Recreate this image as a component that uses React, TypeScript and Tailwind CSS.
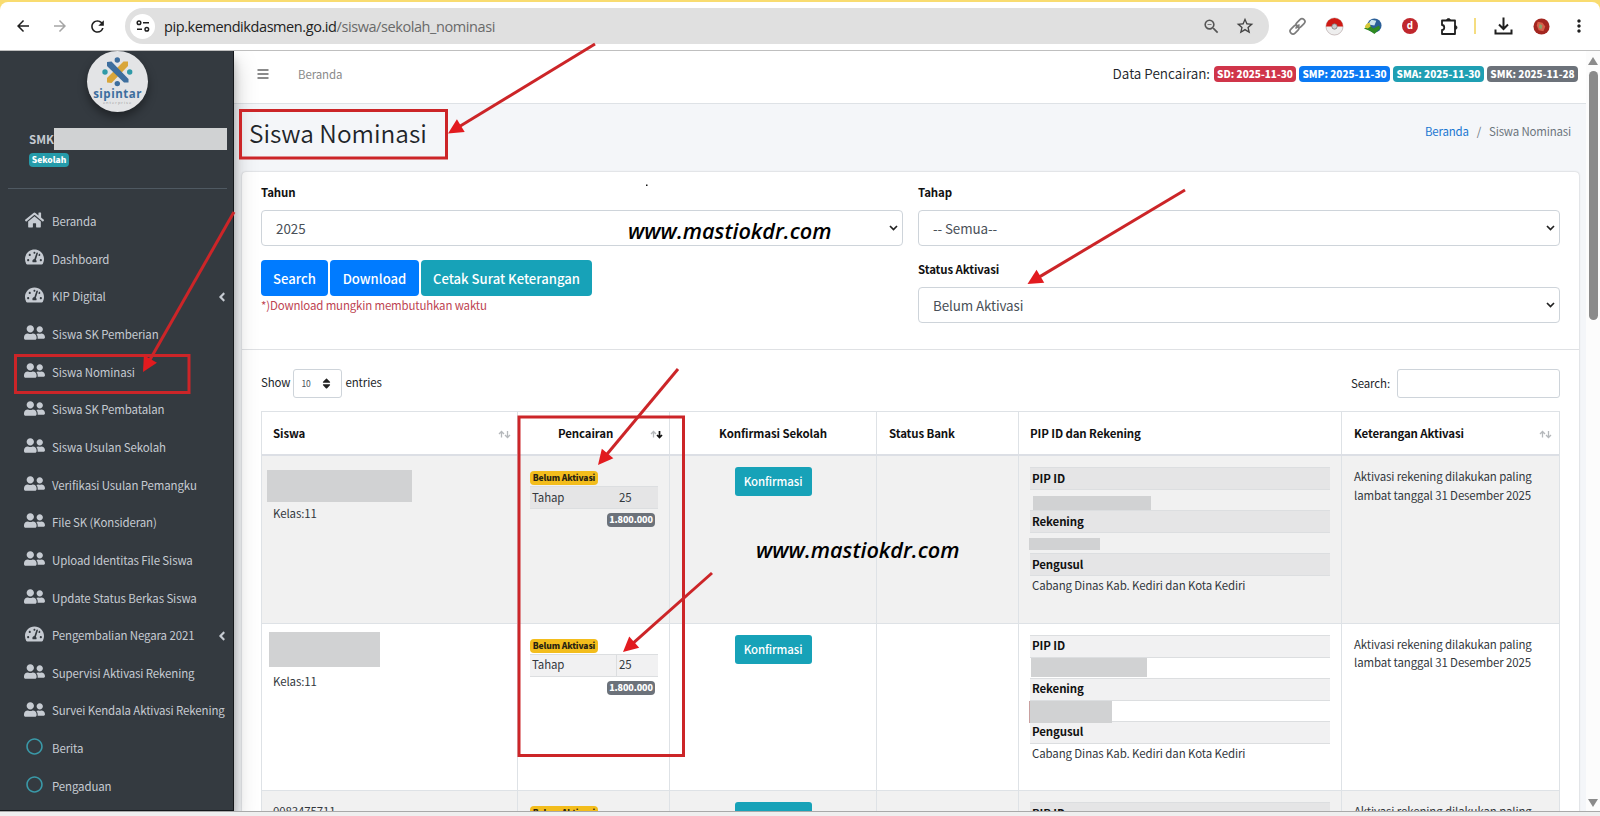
import React from 'react';
import {
    FaHome, FaTachometerAlt, FaUserFriends, FaRegCircle, FaAngleLeft, FaSort,
} from 'react-icons/fa';
import { MdArrowBack, MdArrowForward, MdRefresh, MdStarBorder, MdMoreVert, MdOutlineZoomOut } from 'react-icons/md';

type MenuItem = { label: string; icon: 'home' | 'dash' | 'users' | 'circle'; sub?: boolean };

const menu: MenuItem[] = [
    { label: 'Beranda', icon: 'home' },
    { label: 'Dashboard', icon: 'dash' },
    { label: 'KIP Digital', icon: 'dash', sub: true },
    { label: 'Siswa SK Pemberian', icon: 'users' },
    { label: 'Siswa Nominasi', icon: 'users' },
    { label: 'Siswa SK Pembatalan', icon: 'users' },
    { label: 'Siswa Usulan Sekolah', icon: 'users' },
    { label: 'Verifikasi Usulan Pemangku', icon: 'users' },
    { label: 'File SK (Konsideran)', icon: 'users' },
    { label: 'Upload Identitas File Siswa', icon: 'users' },
    { label: 'Update Status Berkas Siswa', icon: 'users' },
    { label: 'Pengembalian Negara 2021', icon: 'dash', sub: true },
    { label: 'Supervisi Aktivasi Rekening', icon: 'users' },
    { label: 'Survei Kendala Aktivasi Rekening', icon: 'users' },
    { label: 'Berita', icon: 'circle' },
    { label: 'Pengaduan', icon: 'circle' },
];

const MenuIcon = ({ icon }: { icon: MenuItem['icon'] }) => {
    if (icon === 'home') return <FaHome className="w-[19px] h-[18px]" />;
    if (icon === 'dash') return <FaTachometerAlt className="w-[19px] h-[18px]" />;
    if (icon === 'circle') return <FaRegCircle className="w-[17px] h-[17px] text-[#3a99a8]" />;
    return <FaUserFriends className="w-[21px] h-[17px]" />;
};

const BrowserBar = () => (
    <div className="h-[51px] shrink-0 bg-[#f9dc70] pt-[2px]">
        <div className="h-[49px] bg-white rounded-t-lg border-b border-[#bfbfbf] flex items-center text-[#1f1f1f]">
            <MdArrowBack className="w-[18px] h-[18px] ml-[14px]" />
            <MdArrowForward className="w-[18px] h-[18px] ml-[19px] text-[#a5a5a5]" />
            <MdRefresh className="w-[19px] h-[19px] ml-[19px]" />
            <div className="ml-[18px] w-[1144px] h-[36px] rounded-full bg-[#e0e0e0] flex items-center pl-[5px] pr-[14px]">
                <div className="w-[25px] h-[25px] rounded-full bg-white flex items-center justify-center">
                    <svg width="14" height="12" viewBox="0 0 14 12" fill="none" stroke="#1f1f1f" strokeWidth="1.5">
                        <circle cx="3" cy="2.8" r="1.8" />
                        <path d="M7 2.8h6M1 9.2h5" />
                        <circle cx="10.8" cy="9.2" r="1.8" />
                    </svg>
                </div>
                <div className="ml-[9px] pt-[2px] font-['Open_Sans',sans-serif] text-[14.500px] tracking-[-0.420px] text-[#6a6a6a] whitespace-nowrap">
                    <span className="text-[#222]">pip.kemendikdasmen.go.id</span>/siswa/sekolah_nominasi
                </div>
                <MdOutlineZoomOut className="w-[19px] h-[19px] ml-auto text-[#555]" />
                <MdStarBorder className="w-[20px] h-[20px] ml-[14px] text-[#444]" />
            </div>
            <svg className="ml-[19px]" width="19" height="19" viewBox="0 0 19 19" fill="none" stroke="#7d7d7d" strokeWidth="1.700">
                <rect x="7.500" y="3.200" width="10" height="5.800" rx="2.900" transform="rotate(-45 12.500 6.100)" />
                <rect x="1.500" y="9.700" width="10" height="5.800" rx="2.900" transform="rotate(-45 6.500 12.600)" />
                <path d="M7.500 11.500l4-4" />
            </svg>
            <svg className="ml-[18px]" width="19" height="19" viewBox="0 0 20 20">
                <circle cx="10" cy="10" r="9" fill="#eee" stroke="#a99" strokeWidth="0.6" />
                <path d="M1 10a9 9 0 0 1 18 0z" fill="#cf1a14" />
                <circle cx="10" cy="10" r="2.8" fill="#ccc" stroke="#777" strokeWidth="0.8" />
            </svg>
            <svg className="ml-[19px]" width="19" height="19" viewBox="0 0 20 20">
                <circle cx="12" cy="9" r="7.500" fill="#2b5f98" />
                <path d="M9 3a8 8 0 0 0-3 5l6 1 2-5z" fill="#cfe6ee" />
                <path d="M1 12l6-3 4 3 6-3 1 3-6 6-4-3z" fill="#2f8a22" />
                <path d="M2 11c0-3 3-5 5-5l1 4-3 2z" fill="#d7c83a" />
            </svg>
            <div className="ml-[20px] w-[16px] h-[16px] rounded-full bg-[#c0272d] text-white font-['Open_Sans',sans-serif] text-[10px] leading-[14px] font-bold text-center">d</div>
            <svg className="ml-[22px]" width="19" height="19" viewBox="0 0 19 19" fill="none" stroke="#1f1f1f" strokeWidth="1.800" strokeLinejoin="round">
                <path d="M2 3.500h13v13.500H2v-4c3 0 3-5 0-5z" />
                <path d="M6.500 3.500a2 2 0 0 1 4 0zM15 8.500a2 2 0 0 1 0 4z" fill="#1f1f1f" strokeWidth="0.800" />
            </svg>
            <div className="ml-[15px] w-[2px] h-[16px] bg-[#f5dd80]" />
            <svg className="ml-[18px]" width="19" height="18" viewBox="0 0 19 18" fill="none" stroke="#1f1f1f" strokeWidth="2">
                <path d="M9.500 0.500v11M5 7.500l4.500 4.500L14 7.500M1.500 12.500V16.500h16v-4" />
            </svg>
            <svg className="ml-[20px]" width="17" height="17" viewBox="0 0 18 18">
                <circle cx="9" cy="9" r="8.5" fill="#a32620" />
                <path d="M5 4l5 1 3 4-2 5-5-1-2-5z" fill="#d8604a" />
                <path d="M7 6l3 2-1 4-3-2z" fill="#8aa26b" />
            </svg>
            <MdMoreVert className="ml-[19px] w-[20px] h-[20px]" />
        </div>
    </div>
);

const Logo = () => (
    <div className="w-[61px] h-[61px] rounded-full bg-[#e3e4e6] shadow-[0_5px_10px_rgba(0,0,0,0.4)] flex flex-col items-center pt-[6px] overflow-hidden shrink-0">
        <svg className="shrink-0" width="31" height="30" viewBox="0 0 31 30">
            <path d="M26 4.500V9L9.500 26 5 25.500V21L21.500 4.500z" fill="#d9a63a" />
            <path d="M5 5l4.500-.5L26.500 22v3.500H22L5 9z" fill="#3d6e9e" />
            <circle cx="15.300" cy="3" r="2.700" fill="#3d6e9e" />
            <circle cx="15.300" cy="26.600" r="2.700" fill="#3d6e9e" />
            <circle cx="3" cy="15" r="2.700" fill="#2f9aa8" />
            <circle cx="27.700" cy="15" r="2.700" fill="#2f9aa8" />
        </svg>
        <span className="font-['Open_Sans',sans-serif] font-bold text-[11.500px] leading-[14px] tracking-[0.500px] text-[#3d6e9e]">sipintar</span>
        <span className="font-['Open_Sans',sans-serif] text-[4px] leading-[4px] tracking-[1px] text-[#999]">enterprise</span>
    </div>
);

const Sidebar = () => (
    <aside className="w-[234px] shrink-0 bg-[#343a40] border-r border-b border-[#15181b] flex flex-col text-[#c6cbd2] relative z-10 shadow-[0_11px_22px_rgba(0,0,0,0.25),0_8px_8px_rgba(0,0,0,0.22)]">
        <div className="flex justify-center pl-[2px]"><Logo /></div>
        <div className="mt-[16px] ml-[29px] flex items-center h-[22px]">
            <span className="w-[25px] pt-[2px] text-[11.500px] font-bold">SMK</span>
            <div className="w-[173px] h-[22px] bg-[#d0d2d3]" />
        </div>
        <div className="ml-[29px] mt-[3px] w-[40px] h-[14px] rounded-[4px] bg-[#259baa] text-white text-[8.500px] leading-[13px] font-black text-center">Sekolah</div>
        <div className="mt-[21px] ml-[8px] w-[219px] h-[1px] bg-[#4f5962]" />
        <nav className="mt-[14px]">
            {menu.map((m) => (
                <div key={m.label} className="h-[37.65px] flex items-center">
                    <div className="ml-[22px] w-[24px] shrink-0 flex justify-center mb-[4px]"><MenuIcon icon={m.icon} /></div>
                    <span className="ml-[6px] text-[11.460px] tracking-[-0.110px] whitespace-nowrap">{m.label}</span>
                    {m.sub && <FaAngleLeft className="ml-auto mr-[5px] w-[12px] h-[14px]" />}
                </div>
            ))}
        </nav>
    </aside>
);

const NavBar = () => (
    <header className="h-[53px] shrink-0 bg-white border-b border-[#dee2e6] flex items-center pr-[8px] pb-[6px]">
        <svg className="ml-[23px]" width="12" height="12" viewBox="0 0 12 12" stroke="#666" strokeWidth="1.500">
            <path d="M0.500 2h11M0.500 6h11M0.500 10h11" />
        </svg>
        <span className="ml-[29px] pt-[2px] text-[11.460px] tracking-[-0.100px] text-[#8a8a8a]">Beranda</span>
        <div className="ml-auto flex items-center gap-[3px] text-white font-black text-[10px]">
            <span className="text-[13.5px] font-[350] text-[#212529] pr-[1px]">Data Pencairan:</span>
            <span className="w-[82px] h-[16px] leading-[16px] rounded-[4px] text-center bg-[#d0354a]">SD: 2025-11-30</span>
            <span className="w-[91px] h-[16px] leading-[16px] rounded-[4px] text-center bg-[#0b79f3]">SMP: 2025-11-30</span>
            <span className="w-[91px] h-[16px] leading-[16px] rounded-[4px] text-center bg-[#1f9fb3]">SMA: 2025-11-30</span>
            <span className="w-[91px] h-[16px] leading-[16px] rounded-[4px] text-center bg-[#6c727a]">SMK: 2025-11-28</span>
        </div>
    </header>
);

const SelectBox = ({ value }: { value: string }) => (
    <div className="h-[36px] border border-[#ced4da] rounded-[4px] flex items-center pl-[14px] pr-[4px] text-[13.400px] text-[#495057] bg-white">
        <span className="pt-[1px]">{value}</span>
        <svg className="ml-auto" width="9" height="6" viewBox="0 0 9 6" fill="none" stroke="#222" strokeWidth="1.700">
            <path d="M1 1l3.500 3.500L8 1" />
        </svg>
    </div>
);

const Filters = () => (
    <div className="h-[178px] px-[19px] pt-[13px] border-b border-[#dfe1e4] flex gap-[15px]">
        <div className="flex-1">
            <div className="text-[11.460px] tracking-[-0.100px] leading-[14px] font-bold text-[#111]">Tahun</div>
            <div className="mt-[11px]"><SelectBox value="2025" /></div>
            <div className="mt-[14px] flex gap-[2px] text-white text-[13.100px] font-medium">
                <button className="w-[67px] h-[36px] pt-[2px] rounded-[4px] bg-[#007bff]">Search</button>
                <button className="w-[89px] h-[36px] pt-[2px] rounded-[4px] bg-[#007bff]">Download</button>
                <button className="w-[171px] h-[36px] pt-[2px] rounded-[4px] bg-[#17a2b8]">Cetak Surat Keterangan</button>
            </div>
            <div className="mt-[1px] text-[11.460px] tracking-[-0.150px] leading-[16px] text-[#bd4452]">*)Download mungkin membutuhkan waktu</div>
        </div>
        <div className="flex-1 text-[11.460px] tracking-[-0.100px]">
            <div className="leading-[14px] font-bold text-[#111]">Tahap</div>
            <div className="mt-[11px]"><SelectBox value="-- Semua--" /></div>
            <div className="mt-[16px] leading-[14px] font-bold text-[#111]">Status Aktivasi</div>
            <div className="mt-[11px]"><SelectBox value="Belum Aktivasi" /></div>
        </div>
    </div>
);

const SortIcon = ({ active }: { active?: boolean }) => (
    <svg className="shrink-0 mt-[1px]" width="13" height="9" viewBox="0 0 13 9" fill="none" strokeWidth="1.300">
        <path d="M3.500 7.500V1.500M1 4l2.500-2.500L6 4" stroke="#b5b8bb" />
        <path d="M9.500 1v6.500M7 5l2.500 2.500L12 5" stroke={active ? '#111' : '#b5b8bb'} strokeWidth={active ? 1.700 : 1.300} />
    </svg>
);

type Row = {
    name: React.ReactNode;
    pip?: React.ReactNode;
    rekening?: React.ReactNode;
    striped: boolean;
    split?: boolean;
};

const rows: Row[] = [
    {
        striped: true,
        name: <div className="-ml-[6px] mt-[3px] w-[145px] h-[32px] mb-[2px] bg-[#d1d2d3]" />,
        pip: <div className="ml-[3px] mt-[6px] w-[118px] h-[14px] bg-[#d1d2d3]" />,
        rekening: <div className="-ml-[1px] mt-[5px] w-[71px] h-[12px] bg-[#d1d2d3]" />,
    },
    {
        striped: false,
        split: true,
        name: <div className="-ml-[4px] -mt-[3px] w-[111px] h-[35px] mb-[5px] bg-[#d1d2d3]" />,
        pip: <div className="ml-[1px] w-[116px] h-[19px] bg-[#d1d2d3]" />,
        rekening: <div className="-ml-[1px] w-[83px] h-[22px] bg-[#d1d2d3] border-l border-[#c9a0a0]" />,
    },
    { striped: true, name: <div className="leading-[18px]">0083475711</div> },
];

const grid = 'grid grid-cols-[256px_152px_207px_142px_323px_218px]';

const StudentRow = ({ row }: { row: Row }) => {
    const band = row.striped ? 'bg-[#e5e5e6] border-[#dcdee0]' : 'bg-[#f1f1f2] border-[#dcdee0]';
    return (
        <div className={`${grid} h-[167.500px] border-b border-[#dee2e6] ${row.striped ? 'bg-[#f1f1f1]' : 'bg-white'}`}>
            <div className="border-r border-[#dee2e6] pt-[11px] pl-[11px]">
                {row.name}
                <div className="leading-[18px]">Kelas:11</div>
            </div>
            <div className="border-r border-[#dee2e6] pt-[15px] pl-[12px] pr-[11px]">
                <div className="w-[68px] h-[14px] rounded-[4px] bg-[#f3bd1c] text-[#2a2412] text-[8.500px] leading-[13px] font-black text-center">Belum Aktivasi</div>
                <div className={`mt-[1px] h-[23px] border-y flex items-center ${band}`}>
                    <span className="w-[86px] pl-[2px]">Tahap</span>
                    <span className={row.split ? 'pl-[2px] h-full border-l border-[#dcdee0] flex items-center' : 'pl-[3px]'}>25</span>
                </div>
                <div className="mt-[4px] ml-[77px] w-[48px] h-[14px] rounded-[4px] bg-[#6c727a] text-white text-[9px] leading-[14px] font-black text-center">1.800.000</div>
            </div>
            <div className="border-r border-[#dee2e6] pt-[11px] flex items-start justify-center">
                <button className="w-[77px] h-[29px] pt-[1px] rounded-[3px] bg-[#17a2b8] text-white text-[11.460px] font-medium">Konfirmasi</button>
            </div>
            <div className="border-r border-[#dee2e6]" />
            <div className="border-r border-[#dee2e6] pt-[11px] pl-[11px] pr-[11px]">
                <div className={`h-[23px] border-y pl-[2px] flex items-center font-bold text-[#111] ${band}`}>PIP ID</div>
                <div className="h-[20px] flex">{row.pip}</div>
                <div className={`h-[23px] border-y pl-[2px] flex items-center font-bold text-[#111] ${band}`}>Rekening</div>
                <div className="h-[20px] flex">{row.rekening}</div>
                <div className={`h-[23px] border-y pl-[2px] flex items-center font-bold text-[#111] ${band}`}>Pengusul</div>
                <div className="pl-[2px] leading-[19px] whitespace-nowrap">Cabang Dinas Kab. Kediri dan Kota Kediri</div>
            </div>
            <div className="pt-[11px] pl-[12px] leading-[18.700px] whitespace-nowrap">
                Aktivasi rekening dilakukan paling<br />lambat tanggal 31 Desember 2025
            </div>
        </div>
    );
};

const StudentTable = () => (
    <div className="mx-[19px] mt-[13px] border border-b-0 border-[#dee2e6] text-[11.460px] tracking-[-0.110px] text-[#33383d]">
        <div className={`${grid} h-[44px] border-b-2 border-[#dcdfe5] font-bold text-[#111]`}>
            <div className="border-r border-[#dee2e6] flex items-center justify-between pl-[11px] pr-[6px] pt-[1px]">Siswa<SortIcon /></div>
            <div className="border-r border-[#dee2e6] flex items-center justify-between pl-[40px] pr-[6px] pt-[1px]">Pencairan<SortIcon active /></div>
            <div className="border-r border-[#dee2e6] flex items-center justify-center pt-[1px]">Konfirmasi Sekolah</div>
            <div className="border-r border-[#dee2e6] flex items-center pl-[12px] pt-[1px]">Status Bank</div>
            <div className="border-r border-[#dee2e6] flex items-center pl-[11px] pt-[1px]">PIP ID dan Rekening</div>
            <div className="flex items-center justify-between pl-[12px] pr-[8px] pt-[1px]">Keterangan Aktivasi<SortIcon /></div>
        </div>
        {rows.map((row, i) => <StudentRow key={i} row={row} />)}
    </div>
);

const Scrollbar = () => (
    <div className="w-[14px] shrink-0 bg-[#fcfcfc] flex flex-col items-center pt-[6px] pb-[4px]">
        <svg width="10" height="8" viewBox="0 0 10 8"><path d="M5 0l5 8H0z" fill="#8b8b8b" /></svg>
        <div className="mt-[6px] w-[9px] h-[249px] rounded-full bg-[#8b8b8b]" />
        <svg className="mt-auto" width="10" height="8" viewBox="0 0 10 8"><path d="M0 0h10L5 8z" fill="#8b8b8b" /></svg>
    </div>
);

// x1, y1 is the tail, x2, y2 the tip
const arrows = [
    { x1: 595, y1: 44, x2: 448, y2: 133.5 },
    { x1: 234, y1: 212, x2: 143, y2: 372 },
    { x1: 1185, y1: 190, x2: 1027.5, y2: 284 },
    { x1: 678, y1: 369, x2: 598, y2: 465 },
    { x1: 712, y1: 573, x2: 623, y2: 652 },
];

const Annotations = () => (
    <div className="absolute inset-0 z-20 pointer-events-none">
        <svg className="absolute inset-0" width="1600" height="816" viewBox="0 0 1600 816">
            <g fill="none" stroke="#cc2528" strokeWidth="3">
                <rect x="240.500" y="110.500" width="206" height="47.500" />
                <rect x="15.500" y="355.500" width="173.500" height="37" />
                <rect x="519" y="417" width="164.500" height="338.500" />
            </g>
            {arrows.map((a, i) => {
                const len = Math.hypot(a.x2 - a.x1, a.y2 - a.y1);
                const deg = (Math.atan2(a.y2 - a.y1, a.x2 - a.x1) * 180) / Math.PI;
                return (
                    <g key={i} transform={`translate(${a.x1} ${a.y1}) rotate(${deg})`}>
                        <path d={`M0 0H${len - 12}`} stroke="#cc2528" strokeWidth="3" />
                        <path d={`M${len} 0l-15-7.500v15z`} fill="#e21b1f" />
                    </g>
                );
            })}
            <rect x="646" y="184.500" width="1.500" height="1.500" fill="#111" />
        </svg>
        <div className="absolute left-[628px] top-[217px] font-['Open_Sans',sans-serif] italic font-semibold text-[21.700px] leading-[28px] text-black">www.mastiokdr.com</div>
        <div className="absolute left-[756px] top-[536px] font-['Open_Sans',sans-serif] italic font-semibold text-[21.700px] leading-[28px] text-black">www.mastiokdr.com</div>
    </div>
);

export default function App() {
    return (
        <div className="relative w-[1600px] h-[816px] overflow-hidden flex flex-col bg-[#efefef] font-['Noto_Sans_CJK_SC',sans-serif] text-[12px] leading-none text-[#212529]">
            <BrowserBar />
            <div className="h-[761px] shrink-0 flex overflow-hidden border-b border-[#a9a9a9]">
                <Sidebar />
                <main className="w-[1352px] flex flex-col bg-[#f4f6f9]">
                    <NavBar />
                    <div className="h-[69px] shrink-0 flex items-center justify-between pl-[15px] pr-[15px] pb-[10px]">
                        <h1 className="text-[24.400px] font-[350]">Siswa Nominasi</h1>
                        <div className="text-[11.460px] tracking-[-0.170px] text-[#6c757d] flex gap-[8px] pb-[3px]">
                            <span className="text-[#1a76d2]">Beranda</span><span>/</span><span>Siswa Nominasi</span>
                        </div>
                    </div>
                    <div className="ml-[8px] mr-[7px] -mt-[1px] bg-white rounded-t-[4px] shadow-[0_0_2px_rgba(0,0,0,0.25)] shrink-0 h-[660px]">
                        <Filters />
                        <div className="h-[48px] mx-[19px] pt-[19px] flex items-start text-[11.460px] tracking-[-0.100px]">
                            <div className="flex items-center gap-[3px] h-[29px]">
                                <span className="pb-[2px]">Show</span>
                                <div className="w-[49px] h-[29px] border border-[#ced4da] rounded-[3px] flex items-center pl-[7px] pr-[9px] text-[8.500px] text-[#495057]">
                                    10<FaSort className="ml-auto w-[11px] h-[13px] text-[#222]" />
                                </div>
                                <span className="pb-[2px]">entries</span>
                            </div>
                            <div className="ml-auto flex items-center gap-[7px]">
                                Search:
                                <div className="w-[163px] h-[29px] border border-[#ced4da] rounded-[3px]" />
                            </div>
                        </div>
                        <StudentTable />
                    </div>
                </main>
                <Scrollbar />
            </div>
            <Annotations />
        </div>
    );
}
